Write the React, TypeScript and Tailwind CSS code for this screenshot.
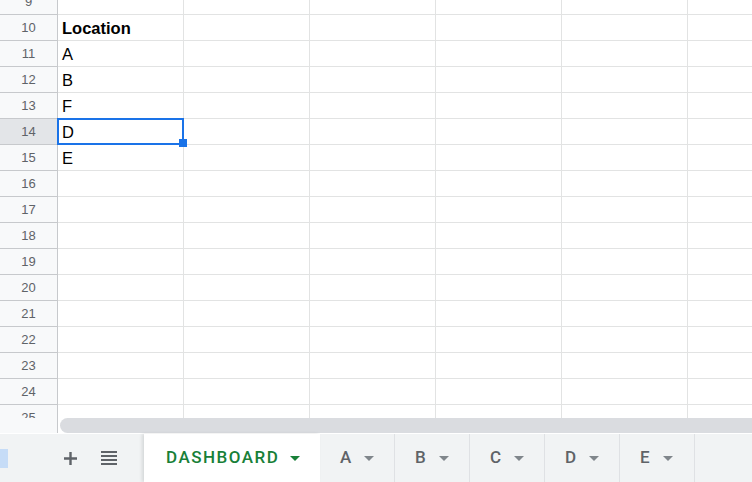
const rows = [9, 10, 11, 12, 13, 14, 15, 16, 17, 18, 19, 20, 21, 22, 23, 24, 25];
const values: Record<number, string> = { 11: "A", 12: "B", 13: "F", 14: "D", 15: "E" };
const cols = [0, 1, 2, 3, 4, 5];
const tabs = ["A", "B", "C", "D", "E"];

function Caret({ className }: { className: string }) {
  return (
    <svg width="10" height="5" viewBox="0 0 10 5" className={className}>
      <path d="M0 0h10L5 5z" fill="currentColor" />
    </svg>
  );
}

export default function App() {
  return (
    <div className="w-[752px] h-[482px] overflow-hidden flex flex-col bg-white font-['Liberation_Sans',Arial,sans-serif]">
      {/* grid */}
      <div className="flex-1 overflow-hidden">
        <div className="-mt-[11px]">
          {rows.map((r) => (
            <div key={r} className="flex h-[26px]">
              <div
                className={`w-[58px] shrink-0 border-r border-b border-[#c7c9cc] flex items-center justify-center pt-[1px] text-[13px] text-[#5f6368] ${
                  r === 14 ? "bg-[#e3e5e8]" : "bg-[#f8f9fa]"
                }`}
              >
                {r}
              </div>
              {cols.map((c) => (
                <div
                  key={c}
                  className="relative w-[126px] shrink-0 border-r border-b border-[#e2e3e3] flex items-center pl-[4px] pt-[2px] text-[16.5px] text-black"
                >
                  {c === 0 && r === 10 && <span className="font-bold">Location</span>}
                  {c === 0 && values[r] && <span>{values[r]}</span>}
                  {c === 0 && r === 14 && (
                    <div className="absolute z-10 left-[-1px] top-[-1px] w-[127px] h-[27px] border-2 border-[#1a73e8]">
                      <div className="absolute right-[-5px] bottom-[-4px] w-[8px] h-[8px] bg-[#1a73e8]" />
                    </div>
                  )}
                </div>
              ))}
            </div>
          ))}
        </div>
      </div>

      {/* horizontal scrollbar */}
      <div className="flex h-[16px] shrink-0 border-b border-white">
        <div className="w-[58px] shrink-0 bg-[#f8f9fa] border-r border-[#c7c9cc]" />
        <div className="flex-1 pl-[2px] bg-white">
          <div className="h-full rounded-l-full bg-[#dadce0]" />
        </div>
      </div>

      {/* sheet tabs */}
      <div className="flex h-[48px] shrink-0 bg-[#f1f3f4] items-stretch">
        <div className="w-[144px] shrink-0 flex items-center">
          <div className="w-[8px] h-[19px] bg-[#c6dcf7]" />
          <svg width="13" height="13" viewBox="0 0 13 13" className="ml-[56px] text-[#5f6368]">
            <path d="M6.5 0v13M0 6.5h13" stroke="currentColor" strokeWidth="2.4" />
          </svg>
          <svg width="16" height="16" viewBox="0 0 16 16" className="ml-[24px] text-[#5f6368]">
            <path d="M0 2h16M0 6h16M0 10h16M0 14h16" stroke="currentColor" strokeWidth="2.2" />
          </svg>
        </div>
        <div className="w-[176px] shrink-0 bg-white shadow-[-2px_0_3px_rgba(60,64,67,0.15)] flex items-center pl-[22px] gap-[11px] text-[17px] font-medium tracking-[1.5px] text-[#188038] font-['Roboto',sans-serif]">
          <span>DASHBOARD</span>
          <Caret className="text-[#188038]" />
        </div>
        {tabs.map((t) => (
          <div
            key={t}
            className="w-[75px] shrink-0 border-r border-[#dfe1e4] flex items-center pl-[20px] gap-[13px] text-[17px] font-medium text-[#5f6368] font-['Roboto',sans-serif]"
          >
            <span>{t}</span>
            <Caret className="text-[#80868b]" />
          </div>
        ))}
      </div>
    </div>
  );
}
